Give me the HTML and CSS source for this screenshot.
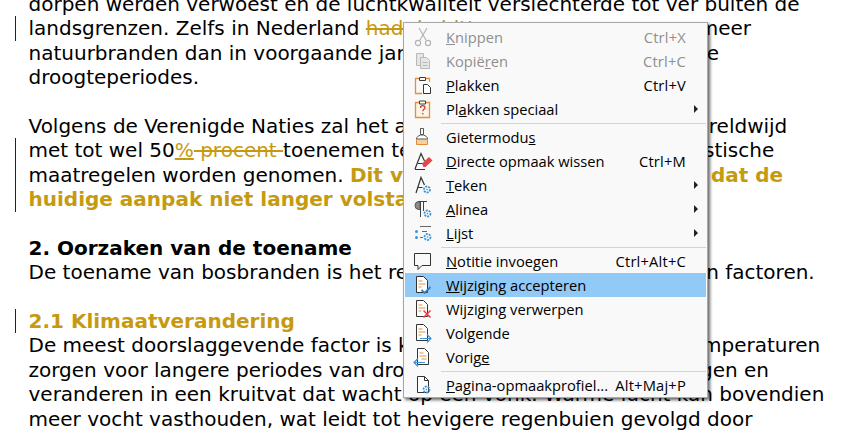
FILE: index.html
```html
<!DOCTYPE html>
<html lang="nl">
<head>
  <meta charset="UTF-8">
  <title>Wijzigingen bijhouden</title>
  <link rel="stylesheet" href="styles.css">
</head>
<body>

  <div class="doc">
    <div class="line">dorpen werden verwoest en de luchtkwaliteit verslechterde tot ver buiten de</div>
    <div class="line changed">landsgrenzen. Zelfs in Nederland <s>had de hitte</s> <span class="hid-a"></span>meer</div>
    <div class="line">natuurbranden dan in voorgaande jaren <span class="hid-b"></span>e</div>
    <div class="line">droogteperiodes.</div>
    <div class="line">&nbsp;</div>
    <div class="line">Volgens de Verenigde Naties zal het aantal <span class="hid-c"></span>reldwijd</div>
    <div class="line changed">met tot wel 50<ins>%</ins><s> procent </s>toenemen tenzij <span class="hid-d"></span>stische</div>
    <div class="line changed">maatregelen worden genomen. <b class="gold">Dit v<span class="hid-e"></span>dat de</b></div>
    <div class="line changed"><b class="gold">huidige aanpak niet langer volstaat.</b></div>
    <div class="line">&nbsp;</div>
    <div class="line"><b>2. Oorzaken van de toename</b></div>
    <div class="line">De toename van bosbranden is het resultaat <span class="hid-f"></span>n factoren.</div>
    <div class="line">&nbsp;</div>
    <div class="line changed"><b class="gold">2.1 Klimaatverandering</b></div>
    <div class="line">De meest doorslaggevende factor is klimaat <span class="hid-g"></span>mperaturen</div>
    <div class="line">zorgen voor langere periodes van droogte <span class="hid-h"></span>gen en</div>
    <div class="line">veranderen in een kruitvat dat wacht op een vonk. Warme lucht kan bovendien</div>
    <div class="line">meer vocht vasthouden, wat leidt tot hevigere regenbuien gevolgd door</div>
  </div>

  <div class="menu">
    <div class="item off">
      <svg class="ico" viewBox="0 0 20 20" fill="none" stroke="#b4b4b4" stroke-width="1.2"><path d="M6 1l7 12M14 1L7 13"/><circle cx="5" cy="16" r="2.6"/><circle cx="15" cy="16" r="2.6"/></svg>
      <span class="label"><u>K</u>nippen</span><span class="key">Ctrl+X</span>
    </div>
    <div class="item off">
      <svg class="ico" viewBox="0 0 20 20" fill="#e6e6e6" stroke="#b8b8b8"><path d="M3.5 2.5h7v12h-7z"/><path d="M7.5 6.5h6l3 3v8h-9z"/><path d="M9.500 11.500h5M9.500 14.500h5" fill="none"/></svg>
      <span class="label">Kopië<u>r</u>en</span><span class="key">Ctrl+C</span>
    </div>
    <div class="item">
      <svg class="ico" viewBox="0 0 20 20" fill="none"><path d="M6 3.500H2.500v15H9M13 3.500h3.500V7" stroke="#e0913c" stroke-width="1.300"/><path d="M6.500 2.500h6v3h-6z" stroke="#3c3c3c"/><path d="M10.500 9.500h4l3 3v6h-7z" fill="#fff" stroke="#333"/></svg>
      <span class="label"><u>P</u>lakken</span><span class="key">Ctrl+V</span>
    </div>
    <div class="item">
      <svg class="ico" viewBox="0 0 20 20" fill="none"><path d="M2.500 3.500h14v15h-14z" fill="#fdf3e6" stroke="#e0913c" stroke-width="1.300"/><path d="M6.500 2h6v3h-6z" fill="#fff" stroke="#3c3c3c"/><path d="M7.500 9c0-3 4.500-3 4.500-.500 0 1.800-2.200 1.800-2.200 3.800M9.800 14v1.500" stroke="#c8403c" stroke-width="1.300"/></svg>
      <span class="label">Pl<u>a</u>kken speciaal</span><i class="arrow"></i>
    </div>
    <hr class="sep">
    <div class="item">
      <svg class="ico" viewBox="0 0 20 20" fill="none"><path d="M7.500 1.500h3v6h-3z" stroke="#555"/><path d="M3.500 12c0-2.500 2-3 4-4h3c2 1 4 1.500 4 4z" fill="#fff" stroke="#555"/><path d="M3.500 12.500h11v5h-11z" fill="#f9cf9f" stroke="#e08a3a"/></svg>
      <span class="label">Gietermodu<u>s</u></span>
    </div>
    <div class="item">
      <svg class="ico" viewBox="0 0 20 20" fill="none"><path d="M2 18L8 2.500 11.500 10M5 12.500h5" stroke="#333" stroke-width="1.200"/><path d="M2 18.500h10" stroke="#333"/><path d="M9 12.500l7-6.500 3.500 3.500-7 6.500h-2z" fill="#e8434a"/></svg>
      <span class="label"><u>D</u>irecte opmaak wissen</span><span class="key">Ctrl+M</span>
    </div>
    <div class="item">
      <svg class="ico" viewBox="0 0 20 20" fill="none"><path d="M3 18L8 2.500 11.500 10M5.500 12.500h4" stroke="#333" stroke-width="1.200"/><circle cx="14" cy="14.500" r="3" stroke="#3a94da" stroke-width="1.800" stroke-dasharray="2 1"/><circle cx="14" cy="14.500" r=".8" fill="#3a94da"/></svg>
      <span class="label"><u>T</u>eken</span><i class="arrow"></i>
    </div>
    <div class="item">
      <svg class="ico" viewBox="0 0 20 20" fill="none"><path d="M7 2.500h-1a4 4 0 000 8h1z" fill="#8c8c8c" stroke="#555"/><path d="M7.500 2v16M10.500 2v10M5 2.500h9" stroke="#444"/><circle cx="14.500" cy="14.500" r="3" stroke="#3a94da" stroke-width="1.800" stroke-dasharray="2 1"/><circle cx="14.500" cy="14.500" r=".8" fill="#3a94da"/></svg>
      <span class="label"><u>A</u>linea</span><i class="arrow"></i>
    </div>
    <div class="item">
      <svg class="ico" viewBox="0 0 20 20" fill="none"><path d="M7 3.500h11M9 8.500h5M7 14.500h3" stroke="#666"/><circle cx="3.500" cy="8.500" r="1.500" fill="#3a94da"/><circle cx="3.500" cy="14.500" r="1.500" fill="#3a94da"/><circle cx="14.500" cy="14" r="3" stroke="#3a94da" stroke-width="1.800" stroke-dasharray="2 1"/><circle cx="14.500" cy="14" r=".8" fill="#3a94da"/></svg>
      <span class="label"><u>L</u>ijst</span><i class="arrow"></i>
    </div>
    <hr class="sep">
    <div class="item">
      <svg class="ico" viewBox="0 0 20 20" fill="none" stroke="#333"><path d="M1.500 2.500h16v12H9l-4 4v-4H1.500z"/></svg>
      <span class="label"><u>N</u>otitie invoegen</span><span class="key">Ctrl+Alt+C</span>
    </div>
    <div class="item active">
      <svg class="ico" viewBox="0 0 20 20" fill="none"><path d="M3.500 1.500h7l4 4v12h-11z" fill="#fff" stroke="#333"/><path d="M5.500 6h4M5.500 9h7M5.500 12h3" stroke="#e0913c"/><path d="M8.500 15l3 3 6-6" stroke="#2f7fc8" stroke-width="1.800"/></svg>
      <span class="label"><u>W</u>ijziging accepteren</span>
    </div>
    <div class="item">
      <svg class="ico" viewBox="0 0 20 20" fill="none"><path d="M3.500 1.500h7l4 4v12h-11z" fill="#fff" stroke="#333"/><path d="M5.500 6h4M5.500 9h7M5.500 12h3" stroke="#e0913c"/><path d="M10.500 11.500l7 7M17.500 11.500l-7 7" stroke="#e8434a" stroke-width="1.600"/></svg>
      <span class="label">Wi<u>j</u>ziging verwerpen</span>
    </div>
    <div class="item">
      <svg class="ico" viewBox="0 0 20 20" fill="none"><path d="M3.500 1.500h7l4 4v12h-11z" fill="#fff" stroke="#333"/><path d="M5.500 6h4M5.500 9h7M5.500 12h3" stroke="#e0913c"/><path d="M7 15.500h11M14 11.500l4 4-4 4" stroke="#3a94da" stroke-width="1.200"/></svg>
      <span class="label">Volgende</span>
    </div>
    <div class="item">
      <svg class="ico" viewBox="0 0 20 20" fill="none"><path d="M4.500 1.500h7l4 4v12h-11z" fill="#fff" stroke="#333"/><path d="M6.500 6h4M6.500 9h7M8.500 12h5" stroke="#e0913c"/><path d="M12 15.500H1M5 11.500l-4 4 4 4" stroke="#3a94da" stroke-width="1.200"/></svg>
      <span class="label">Vorig<u>e</u></span>
    </div>
    <hr class="sep">
    <div class="item">
      <svg class="ico" viewBox="0 0 20 20" fill="none"><path d="M4.500 1.500h7l4 4v12h-11z" fill="#fff" stroke="#333"/><path d="M11.500 1.500v4h4" stroke="#333"/><circle cx="13.500" cy="14.500" r="3" stroke="#3a94da" stroke-width="1.800" stroke-dasharray="2 1"/><circle cx="13.500" cy="14.500" r=".8" fill="#3a94da"/></svg>
      <span class="label"><u>P</u>agina-opmaakprofiel...</span><span class="key">Alt+Maj+P</span>
    </div>
  </div>

</body>
</html>
```

FILE: styles.css
```css
body {
  margin: 0;
  background: white;
  font-family: "DejaVu Sans", sans-serif;
  color: #000;
  overflow: hidden;
  height: 436px;
  position: relative;
}

/* document */
.doc {
  margin-top: -8px;
  padding-left: 28.500px;
  font-size: 20px;
}

.line {
  height: 24.400px;
  line-height: 24.400px;
  white-space: nowrap;
  position: relative;
}

.changed::before {
  content: "";
  position: absolute;
  left: -13.500px;
  top: 0;
  bottom: 0;
  border-left: 1px solid #222;
}

.gold {
  color: #c69a10;
}

s {
  color: #c69a10;
}

ins {
  color: #c69a10;
}

/* the words behind the menu */
.hid-a { display: inline-block; width: 205px; }
.hid-b { display: inline-block; width: 271px; }
.hid-c { display: inline-block; width: 245px; }
.hid-d { display: inline-block; width: 252px; }
.hid-e { display: inline-block; width: 308px; }
.hid-f { display: inline-block; width: 223px; }
.hid-g { display: inline-block; width: 223px; }
.hid-h { display: inline-block; width: 244px; }

/* context menu */
.menu {
  position: absolute;
  left: 403px;
  top: 22px;
  width: 305px;
  height: 376px;
  padding: 2px 0 0 1px;
  box-sizing: border-box;
  background: #f9f9f9;
  border: 1px solid #a8a8a8;
  box-shadow: 2px 2px 3px rgba(0,0,0,0.6);
  font-family: "Open Sans", sans-serif;
  font-size: 14.700px;
}

.item {
  display: flex;
  align-items: center;
  height: 24px;
  padding: 0 21px 0 8px;
}

.item.active {
  margin-right: 1px;
  background: #91c9f7;
}

.off {
  color: #8f8f8f;
}

.ico {
  width: 20px;
  height: 20px;
  margin-right: 13px;
  flex: none;
}

.label {
  flex: 1;
  white-space: nowrap;
}

.key {
  white-space: nowrap;
  letter-spacing: 0.200px;
}

.arrow {
  width: 0;
  height: 0;
  border-left: 4px solid #222;
  border-top: 4px solid transparent;
  border-bottom: 4px solid transparent;
  margin-right: -12px;
}

.sep {
  height: 1px;
  margin: 2px 1px 1px 36px;
  border: 0;
  background: #d4d4d4;
}
```
